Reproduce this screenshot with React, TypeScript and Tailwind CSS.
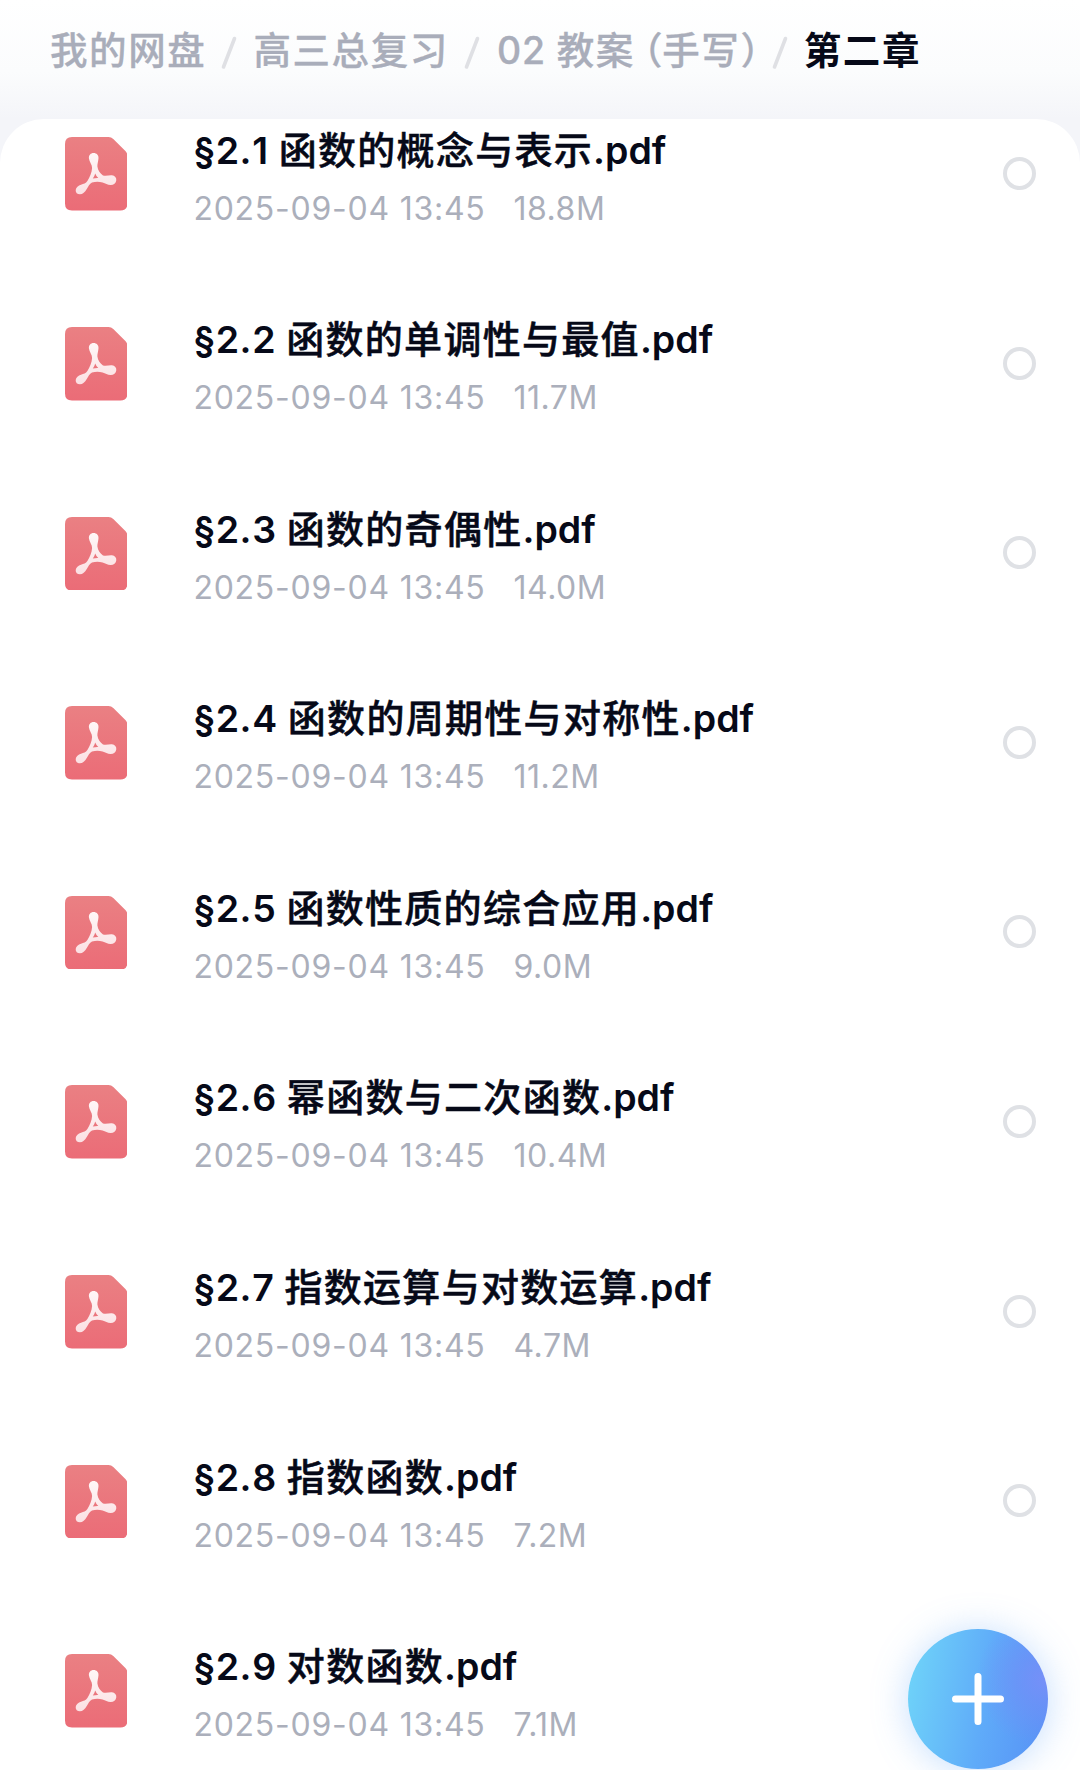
import { Fragment } from "react";

interface FileEntry {
  section: string;
  title: string;
  date: string;
  size: string;
}

const files: FileEntry[] = [
  { section: "§2.1", title: "函数的概念与表示", date: "2025-09-04 13:45", size: "18.8M" },
  { section: "§2.2", title: "函数的单调性与最值", date: "2025-09-04 13:45", size: "11.7M" },
  { section: "§2.3", title: "函数的奇偶性", date: "2025-09-04 13:45", size: "14.0M" },
  { section: "§2.4", title: "函数的周期性与对称性", date: "2025-09-04 13:45", size: "11.2M" },
  { section: "§2.5", title: "函数性质的综合应用", date: "2025-09-04 13:45", size: "9.0M" },
  { section: "§2.6", title: "幂函数与二次函数", date: "2025-09-04 13:45", size: "10.4M" },
  { section: "§2.7", title: "指数运算与对数运算", date: "2025-09-04 13:45", size: "4.7M" },
  { section: "§2.8", title: "指数函数", date: "2025-09-04 13:45", size: "7.2M" },
  { section: "§2.9", title: "对数函数", date: "2025-09-04 13:45", size: "7.1M" },
];

function PdfIcon() {
  return (
    <svg width="62.4" height="73.6" viewBox="0 0 62.4 73.6" className="mt-[1.5px] shrink-0">
      <defs>
        <linearGradient id="pdf-bg" x1="0" y1="0" x2="0" y2="1">
          <stop offset="0" stopColor="#ea8083" />
          <stop offset="1" stopColor="#eb6c77" />
        </linearGradient>
        <linearGradient id="pdf-mark" x1="0" y1="0" x2="0" y2="1">
          <stop offset="0" stopColor="#fff7f7" />
          <stop offset="1" stopColor="#fbe0e3" />
        </linearGradient>
      </defs>
      <path
        d="M7 0H43.5Q46.3 0 48.3 2L60.4 14Q62.4 16 62.4 19V66.6Q62.4 73.6 55.4 73.6H7Q0 73.6 0 66.6V7Q0 0 7 0Z"
        fill="url(#pdf-bg)"
      />
      <path
        fillRule="evenodd"
        fill="url(#pdf-mark)"
        d="M28.6 16C31.6 16 33.7 18.2 33.5 21.2C33.3 24.4 32.2 27 32.4 29.6C32.8 33.4 35.3 36.8 38 38.4C41.2 39.4 44 38 47 38.3C49.8 38.6 51.5 40.7 51.3 43.2C51 46.2 48.6 48.2 45.5 48.1C42.4 48 40.5 46.2 37.6 45.4C34.2 44.6 30.5 44.6 27 45.4C24.4 46.6 23.4 49.4 21.6 52.2C20 54.8 17.8 57.2 14.9 57.3C12.2 57.3 10.5 55.4 10.7 52.9C10.9 50.2 13.4 48.6 16 47.7C18.7 46.8 20.8 46.4 22.4 44C24.8 40.4 26.8 35.4 27.1 31C27.2 27.6 24.2 24.6 23.9 21.2C23.7 18.2 25.7 16 28.6 16ZM30.2 36.4Q29.6 39 27.8 41.6Q30.6 41 33.3 41.1Q31.2 39 30.2 36.4Z"
      />
    </svg>
  );
}

function FileRow({ file }: { file: FileEntry }) {
  return (
    <li className="flex h-[110px] items-center pl-[65px] pr-[44px]">
      <PdfIcon />
      <div className="ml-[66px] flex flex-1 flex-col whitespace-nowrap pt-[11px]">
        <span className="text-[37.5px] leading-[58px] font-semibold text-[#060918]">
          <span className="tracking-[0.6px] [font-kerning:none]">{file.section} </span>
          <span className="text-[38px] font-medium tracking-[1.3px] [-webkit-text-stroke:0.5px_#060918]">{file.title}</span>
          .pdf
        </span>
        <div className="flex gap-[28px] text-[32px] leading-[58px] text-[#abafbb]">
          <span className="tracking-[0.75px]">{file.date}</span>
          <span className="tracking-[0.5px]">{file.size}</span>
        </div>
      </div>
      <span className="size-[33px] shrink-0 rounded-full border-4 border-[#dfe1e5]" />
    </li>
  );
}

function Breadcrumb() {
  const crumbs = [
    "我的网盘",
    "高三总复习",
    <>
      <span className="ml-[1px] tracking-[0.8px]">02 </span>教案
      <span className="ml-[9px] tracking-[-0.4px] [font-feature-settings:'halt']">（</span>手写
      <span className="-mr-[4px] [font-feature-settings:'halt']">）</span>
    </>,
  ];
  return (
    <nav className="flex h-[118.5px] items-start whitespace-nowrap bg-linear-to-b from-white via-[#fbfcfd] via-60% to-[#f4f5f9] pt-[23px] pl-[50px] text-[37.5px] leading-[56px] font-medium tracking-[1.6px] text-[#a9adba]">
      {crumbs.map((crumb, i) => (
        <Fragment key={i}>
          <span className="[-webkit-text-stroke:0.3px_#a9adba]">{crumb}</span>
          <svg width="16" height="34" viewBox="0 0 16 34" className="mt-[13px] mr-[16px] ml-[15px] shrink-0">
            <path d="M13.5 2.5L2.5 31" stroke="#dfe0e4" strokeWidth="3.6" strokeLinecap="round" />
          </svg>
        </Fragment>
      ))}
      <span className="font-semibold text-[#060918]">第二章</span>
    </nav>
  );
}

export default function App() {
  return (
    <div className="relative h-[1770px] w-[1080px] overflow-hidden bg-[#f4f5f9] font-['Inter','Noto_Sans_CJK_SC',sans-serif]">
      <Breadcrumb />
      <ul className="flex h-[1660px] flex-col gap-[79.6px] rounded-t-[44px] bg-white">
        {files.map((file) => (
          <FileRow key={file.section} file={file} />
        ))}
      </ul>

      {/* Floating add button */}
      <button
        type="button"
        className="absolute right-[32px] bottom-px flex size-[140px] items-center justify-center rounded-full bg-[radial-gradient(circle_at_98%_36%,#7690f8_0%,rgba(112,144,247,0.7)_16%,rgba(100,150,247,0)_42%),linear-gradient(100deg,#70d6f9_0%,#5fabf9_55%,#5690f5_100%)] shadow-[0_2px_36px_rgba(90,160,250,0.35)]"
      >
        <svg width="52" height="52" viewBox="0 0 52 52">
          <path d="M26 3.5V48.5M3.5 26H48.5" stroke="#fff" strokeWidth="7" strokeLinecap="round" />
        </svg>
      </button>
    </div>
  );
}
